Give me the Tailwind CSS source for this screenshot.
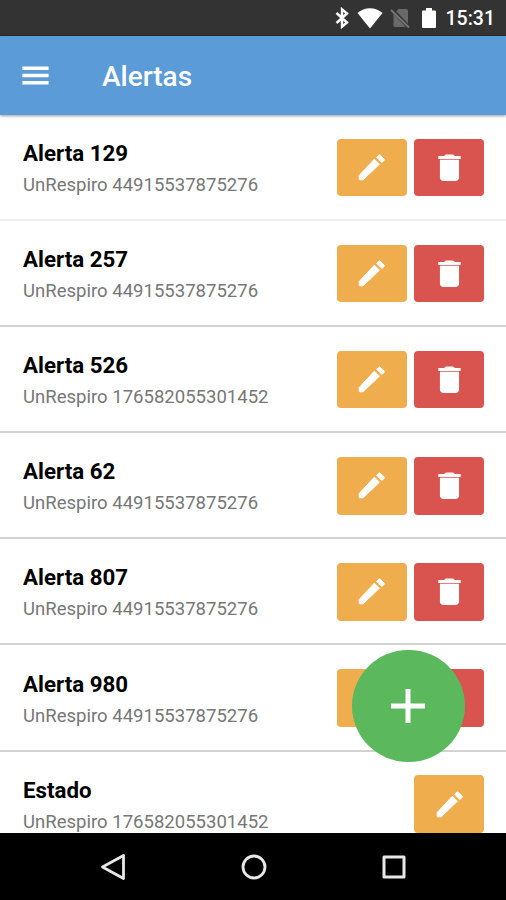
<!DOCTYPE html>
<html lang="es">
<head>
    <meta charset="UTF-8">
    <meta name="viewport" content="width=device-width, initial-scale=1.0">
    <title>Alertas</title>
    <script src="https://cdn.jsdelivr.net/npm/@tailwindcss/browser@4"></script>
</head>
<body class="bg-black font-['Roboto',sans-serif]">
    <!-- Icon shapes -->
    <svg class="hidden">
        <symbol id="edit" viewBox="0 0 512 512"><path d="M76 378v48q0 10 10 10h48L372 208l-74-74L80 368q-4 4-4 10zM440 152q9-10 0-20l-56-56q-10-9-20 0l-32 32 76 76z" stroke="#fff" stroke-width="14" stroke-linejoin="round"/></symbol>
        <symbol id="trash" viewBox="0 0 512 512"><path d="M116 405.429C116 428.846 140 452 166 452h180C372 452 396 428.846 396 405.429V144H116v261.429zM420 88h-84l-26.785-22H202.786L176 88H92v42h328V88z"/></symbol>
    </svg>

    <div class="relative flex flex-col w-[506px] h-[900px] overflow-hidden">
        <!-- Status bar -->
        <div class="h-9 shrink-0 bg-[#333333] border-b border-[#2a2a24] flex items-center justify-end pr-[11px] text-white">
            <svg class="w-[14px] h-[22px] mr-[8px]" viewBox="0 0 14 22" fill="none" stroke="currentColor" stroke-width="2.400"><path d="M1.500 6l10.500 9.500L7 19.700V2.300L12 6.500l-10.500 9.500"/></svg>
            <svg class="w-[26px] h-[22px] mr-[7px]" viewBox="0 0 26 22" fill="currentColor"><path d="M13 21.500L.5 6C4 2.800 8.300 1.200 13 1.200s9 1.600 12.500 4.800z"/></svg>
            <svg class="w-[21px] h-[22px] mr-[10px]" viewBox="0 0 21 22"><path d="M8.500 2H16.500q1.500 0 1.500 1.500V20H5q-1.500 0-1.500-1.500V7z" fill="#696969"/><path d="M1.500 2L19 20.500" stroke="#333333" stroke-width="4"/><path d="M1 3l18 17.500" stroke="#777777" stroke-width="1.800"/></svg>
            <svg class="w-[16px] h-[22px] mr-[9px]" viewBox="0 0 16 22" fill="currentColor"><path d="M5 1h6v2.500h3q1 0 1 1V20q0 1-1 1H2q-1 0-1-1V4.500q0-1 1-1h3z"/></svg>
            <span class="text-[19.5px] leading-none font-medium pt-[3px]">15:31</span>
        </div>

        <!-- Header -->
        <header class="relative z-10 h-[79px] shrink-0 bg-[#5b9bd7] shadow-[0_1px_3px_rgba(0,0,0,0.4)] flex items-center pl-[18px] text-white">
            <svg class="w-[35px] h-[35px]" viewBox="0 0 512 512" fill="currentColor"><path d="M64 386h384v-48H64v48zm0-106h384v-48H64v48zM64 126v48h384v-48H64z"/></svg>
            <h1 class="ml-[49px] pt-0.5 text-[28px] leading-none font-medium">Alertas</h1>
        </header>

        <!-- Alert list -->
        <main id="list" class="h-[718px] shrink-0 overflow-hidden bg-white"></main>

        <!-- Navigation bar -->
        <nav class="flex-1 bg-black flex items-center justify-between px-[100px]">
            <svg class="w-[26px] h-[28px]" viewBox="0 0 26 28" fill="none" stroke="#e8e8e8" stroke-width="2.800" stroke-linejoin="round"><path d="M23.500 2.500v23L2.500 14z"/></svg>
            <svg class="w-[26px] h-[26px]" viewBox="0 0 26 26" fill="none" stroke="#e8e8e8" stroke-width="2.800"><circle cx="13" cy="13" r="11"/></svg>
            <svg class="w-[24px] h-[24px]" viewBox="0 0 24 24" fill="none" stroke="#e8e8e8" stroke-width="3" stroke-linejoin="round"><path d="M2 2h20v20H2z"/></svg>
        </nav>

        <!-- Add button -->
        <button class="absolute left-[352px] top-[650px] w-[112.500px] h-[112px] rounded-full bg-[#5cb85c] flex items-center justify-center">
            <svg class="w-[34px] h-[34px]" viewBox="0 0 34 34" stroke="#fff" stroke-width="5"><path d="M17 0v34M0 17h34"/></svg>
        </button>
    </div>

    <script>
        const alerts = [
            { name: "Alerta 129", device: "UnRespiro 44915537875276", line: "border-[#eeeeee]" },
            { name: "Alerta 257", device: "UnRespiro 44915537875276" },
            { name: "Alerta 526", device: "UnRespiro 176582055301452" },
            { name: "Alerta 62", device: "UnRespiro 44915537875276" },
            { name: "Alerta 807", device: "UnRespiro 44915537875276" },
            { name: "Alerta 980", device: "UnRespiro 44915537875276" },
            { name: "Estado", device: "UnRespiro 176582055301452", fixed: true },
        ];

        const editButton = `
            <button class="w-[70px] h-[57.5px] rounded-[4px] bg-[#f0ad4e] flex items-center justify-center">
                <svg class="w-[35px] h-[35px] fill-white"><use href="#edit"/></svg>
            </button>`;
        const deleteButton = `
            <button class="w-[70px] h-[57.5px] rounded-[4px] bg-[#d9534f] flex items-center justify-center">
                <svg class="w-[35px] h-[35px] fill-white"><use href="#trash"/></svg>
            </button>`;

        // Rows marked as fixed can be edited but not deleted
        document.getElementById("list").innerHTML = alerts.map(a => `
            <div class="h-[106.1px] pt-[1px] border-b-2 ${a.line || "border-[#d2d2d2]"} flex items-center justify-between pl-[23px] pr-[22px]">
                <div class="pt-[4px]">
                    <h2 class="text-[22.3px] leading-[30px] font-bold text-black">${a.name}</h2>
                    <p class="mt-[1px] text-[18.55px] leading-[32px] text-[#777777]">${a.device}</p>
                </div>
                <div class="flex gap-[7.5px]">${editButton}${a.fixed ? "" : deleteButton}</div>
            </div>`).join("");
    </script>
</body>
</html>
